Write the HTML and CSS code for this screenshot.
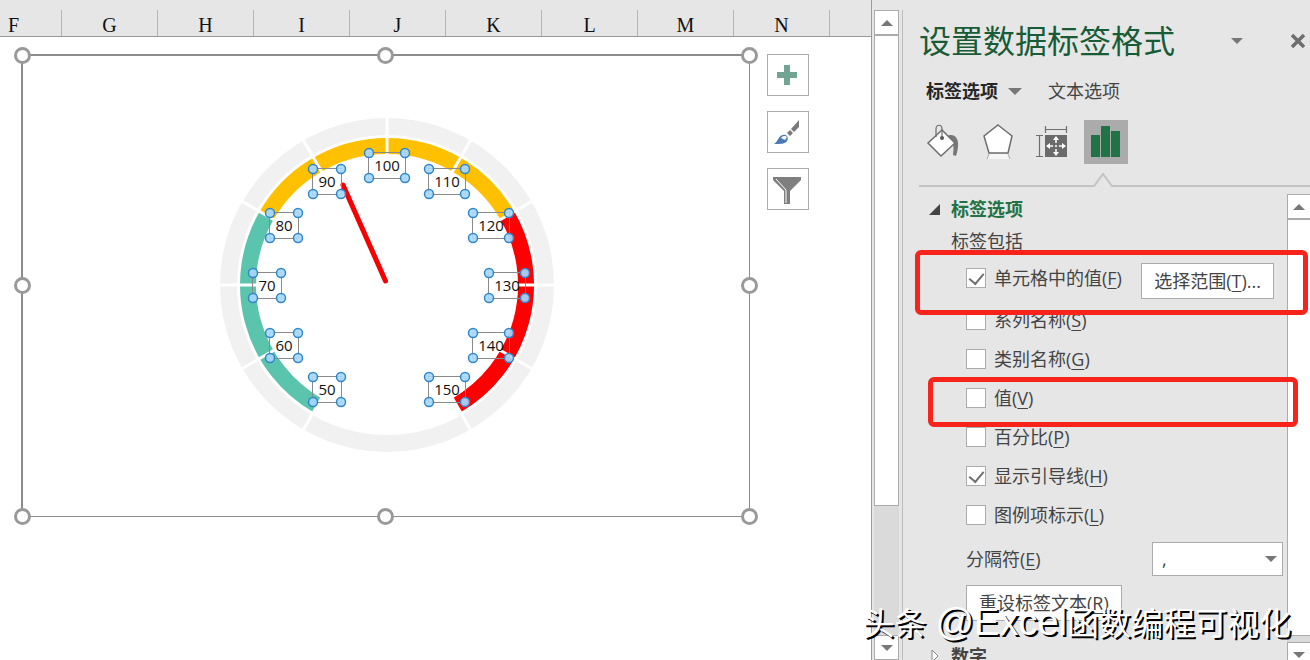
FILE: index.html
```
<!DOCTYPE html>
<html lang="zh-CN">
<head>
    <meta charset="UTF-8">
    <title>设置数据标签格式</title>
    <link rel="stylesheet" href="styles.css">
</head>
<body>
    <div class="app">
        <div class="sheet">
            <div class="columns">
                <span>F</span><span>G</span><span>H</span><span>I</span><span>J</span><span>K</span><span>L</span><span>M</span><span>N</span>
            </div>
            <div class="cells">
                <svg class="chart" viewBox="14 46 744 480" id="chart">
                    <path d="M21 55H749M22 55V517" stroke="#8c8c8c" stroke-width="2" fill="none"/>
                    <path d="M749.5 55V516.5H22" stroke="#8c8c8c" fill="none"/>
                    <g class="frame-handles">
                        <circle cx="22.5" cy="55.5" r="7"/>
                        <circle cx="385.5" cy="55.5" r="7"/>
                        <circle cx="749.5" cy="55.5" r="7"/>
                        <circle cx="22.5" cy="285.5" r="7"/>
                        <circle cx="749.5" cy="285.5" r="7"/>
                        <circle cx="22.5" cy="516.5" r="7"/>
                        <circle cx="385.5" cy="516.5" r="7"/>
                        <circle cx="749.5" cy="516.5" r="7"/>
                    </g>
                    <circle cx="387" cy="285" r="158.5" fill="none" stroke="#f1f1f1" stroke-width="17"/>
                    <g id="bands" fill="none" stroke-width="16"></g>
                    <g id="ticks" stroke="#fff" stroke-width="3"></g>
                    <path d="M343 185L385.5 281" stroke="#f80000" stroke-width="5" stroke-linecap="round"/>
                    <g id="labels"></g>
                </svg>
                <div class="chart-tools">
                    <button aria-label="图表元素">
                        <svg width="40" height="40" viewBox="0 0 40 40"><path d="M16 10h6v7h7v6h-7v7h-6v-7H9v-6h7z" fill="#72a493"/></svg>
                    </button>
                    <button aria-label="图表样式">
                        <svg width="40" height="40" viewBox="0 0 40 40">
                            <path d="M31 8v7l-5 5-3-3zM22 18l3 3-3 3-3-3z" fill="#7a7a7a"/>
                            <path d="M6 32c4-2 4-8 9-9 4-1 6 3 4 6-2 3-6 3-13 3z" fill="#4a7ab5"/>
                            <path d="M13 26c1-2 4-3 6-1l-2 3-2-1z" fill="#fff"/>
                        </svg>
                    </button>
                    <button aria-label="图表筛选器">
                        <svg width="40" height="40" viewBox="0 0 40 40">
                            <path d="M5 8h28v3L22 22v13h-6V22L5 11z" fill="#7f7f7f"/>
                            <path d="M8 10l10 11v13" fill="none" stroke="#fff"/>
                        </svg>
                    </button>
                </div>
            </div>
        </div>

        <div class="scrollbar sheet-scroll">
            <button class="scroll-btn" aria-label="向上"><span class="up"></span></button>
            <div class="thumb"></div>
            <div class="track"></div>
            <button class="scroll-btn" aria-label="向下"><span class="down"></span></button>
        </div>

        <div class="panel">
            <div class="panel-head">
                <h1>设置数据标签格式</h1>
                <button class="plain menu" aria-label="任务窗格选项"><span class="down"></span></button>
                <button class="plain" aria-label="关闭">
                    <svg width="16" height="16" viewBox="0 0 16 16"><path d="M2 2l12 12M14 2L2 14" stroke="#6e6e6e" stroke-width="3.5"/></svg>
                </button>
            </div>
            <div class="tabs">
                <button class="plain active">标签选项 <span class="down"></span></button>
                <button class="plain">文本选项</button>
            </div>
            <div class="icons">
                <button class="plain" aria-label="填充与线条">
                    <svg width="44" height="44" viewBox="0 0 44 44">
                        <path d="M27 15c8-1 12 6 7 21l-3-1c1-8 1-12-4-16z" fill="#777"/>
                        <path d="M20 10l13 13-14 13L6 23z" fill="#fff" stroke="#6e6e6e" stroke-width="1.5"/>
                        <path d="M14 17V9c0-5 6-5 6 0v8" fill="none" stroke="#6e6e6e" stroke-width="1.2"/>
                        <circle cx="20" cy="18" r="2" fill="#555"/>
                    </svg>
                </button>
                <button class="plain" aria-label="效果">
                    <svg width="44" height="44" viewBox="0 0 44 44">
                        <path d="M13 34h19l2 5H11z" fill="#f6f6f6"/>
                        <path d="M22 5l14 11-4 17H13L8 16z" fill="#fff" stroke="#6e6e6e" stroke-width="1.5"/>
                        <path d="M13 34l-2 5M32 34l2 5" stroke="#aaa"/>
                    </svg>
                </button>
                <button class="plain" aria-label="大小与属性">
                    <svg width="44" height="44" viewBox="0 0 44 44">
                        <path d="M15 15h22v22H15z" fill="#6b6b6b"/>
                        <path d="M15 9.5h22M15.500 6v7M36.500 6v7M9.500 15v22M6 15.500h7M6 36.500h7" stroke="#6e6e6e" stroke-width="1.2"/>
                        <path d="M26 18v5M26 29v5M18 26h5M29 26h5M25 26h2" stroke="#fff" stroke-width="1.5"/>
                        <path d="M26 16l3 4h-6zM26 36l3-4h-6zM16 26l4-3v6zM36 26l-4-3v6z" fill="#fff"/>
                    </svg>
                </button>
                <button class="plain selected" aria-label="标签选项">
                    <svg width="44" height="44" viewBox="0 0 44 44"><path d="M7 15h9v22H7zM17 6h9v31h-9zM27 11h9v26h-9z" fill="#217346"/></svg>
                </button>
            </div>
            <div class="divider">
                <span></span>
                <svg width="20" height="14" viewBox="0 0 20 14"><path d="M0 13h1L10 1l9 12h1" fill="none" stroke="#c3c3c3" stroke-width="2"/></svg>
                <span class="rest"></span>
            </div>
            <div class="panel-body">
                <div class="options">
                    <h2><span class="open"></span>标签选项</h2>
                    <p>标签包括</p>
                    <div class="row first">
                        <label><input type="checkbox" checked>单元格中的值(<u>F</u>)</label>
                        <button class="box-btn">选择范围(<u>T</u>)...</button>
                        <div class="mark mark-range"></div>
                    </div>
                    <div class="row"><label><input type="checkbox">系列名称(<u>S</u>)</label></div>
                    <div class="row"><label><input type="checkbox">类别名称(<u>G</u>)</label></div>
                    <div class="row">
                        <label><input type="checkbox">值(<u>V</u>)</label>
                        <div class="mark mark-value"></div>
                    </div>
                    <div class="row"><label><input type="checkbox">百分比(<u>P</u>)</label></div>
                    <div class="row"><label><input type="checkbox" checked>显示引导线(<u>H</u>)</label></div>
                    <div class="row"><label><input type="checkbox">图例项标示(<u>L</u>)</label></div>
                    <div class="row separator">
                        <label for="sep">分隔符(<u>E</u>)</label>
                        <div class="select">
                            <select id="sep"><option>,</option></select>
                            <span class="down"></span>
                        </div>
                    </div>
                    <button class="box-btn reset">重设标签文本(<u>R</u>)</button>
                    <h2 class="closed-title">
                        <svg width="8" height="14" viewBox="0 0 8 14"><path d="M1 1l6 6-6 6z" fill="#fff" stroke="#888"/></svg>数字
                    </h2>
                </div>
                <div class="scrollbar panel-scroll">
                    <button class="scroll-btn" aria-label="向上"><span class="up"></span></button>
                    <div class="thumb"></div>
                    <div class="track"></div>
                    <button class="scroll-btn" aria-label="向下"><span class="down"></span></button>
                </div>
            </div>
        </div>
        <div class="watermark">头条 <span>@Excel</span>函数编程可视化</div>
    </div>
    <script src="chart.js"></script>
</body>
</html>
```
FILE: styles.css
```
* {
    box-sizing: border-box;
}
body {
    margin: 0;
    background: #e6e6e6;
    color: #444;
    font: 18px/26px "Open Sans", "Noto Sans CJK SC", sans-serif;
}
button, select {
    font: inherit;
    color: inherit;
    padding: 0;
}
.app {
    position: relative;
    display: flex;
    height: 100vh;
    overflow: hidden;
}

/* worksheet */
.sheet {
    flex: 1;
    min-width: 0;
    display: flex;
    flex-direction: column;
    border-right: 1px solid #9b9b9b;
    background: #fff;
}
.columns {
    display: flex;
    height: 37px;
    padding-top: 10px;
    background: #e6e6e6;
    border-bottom: 1px solid #999;
    overflow: hidden;
}
.columns span {
    flex: 0 0 96px;
    text-align: center;
    color: #111;
    font: 20px/30px "Liberation Serif", serif;
    border-right: 1px solid #b5b5b5;
}
.columns span:first-child {
    margin-left: -34px;
}
.cells {
    display: flex;
    align-items: flex-start;
    gap: 9px;
    padding: 9px 0 0 14px;
}
.chart {
    flex: 0 1 744px;
    min-width: 0;
}
.frame-handles circle {
    fill: #fff;
    stroke: #999;
    stroke-width: 3;
}
.data-label rect {
    fill: none;
    stroke: #8a8a8a;
}
.data-label circle {
    fill: #a6d8ff;
    fill-opacity: 0.9;
    stroke: #2f86cc;
    stroke-width: 1.5;
}
.data-label text {
    font: 15px "Open Sans", sans-serif;
    fill: #111;
    text-anchor: middle;
}
.chart-tools {
    display: flex;
    flex-direction: column;
    gap: 15px;
    padding-top: 8px;
}
.chart-tools button {
    width: 42px;
    height: 42px;
    background: #fff;
    border: 1px solid #ababab;
}
.chart-tools svg {
    display: block;
}

/* arrows */
.up, .down {
    display: inline-block;
    border: 6px solid transparent;
}
.up {
    border-top: 0;
    border-bottom: 6px solid #777;
}
.down {
    border-bottom: 0;
    border-top: 6px solid #777;
}

/* scrollbars */
.scrollbar {
    display: flex;
    flex-direction: column;
    background: #dadada;
}
.scroll-btn {
    display: flex;
    flex-shrink: 0;
    align-items: center;
    justify-content: center;
    height: 25px;
    background: #fff;
    border: 1px solid #ababab;
}
.thumb {
    background: #fff;
    border: 1px solid #ababab;
}
.sheet-scroll {
    width: 25px;
    margin: 10px 3px 0 2px;
}
.sheet-scroll .thumb {
    flex: 471;
}
.sheet-scroll .track {
    flex: 130;
}
.panel-scroll {
    width: 23px;
    margin-bottom: -7px;
}
.panel-scroll .thumb {
    flex: 1;
}
.panel-scroll .track {
    height: 6px;
}
.panel-scroll .scroll-btn, .panel-scroll .thumb {
    border-right: 0;
}

/* format pane */
.panel {
    width: 408px;
    margin-top: 10px;
    border-left: 1px solid #bcbcbc;
    display: flex;
    flex-direction: column;
}
.plain {
    display: flex;
    align-items: center;
    background: none;
    border: 0;
}
.panel-head {
    display: flex;
    align-items: center;
    height: 62px;
    padding: 0 4px 0 16px;
}
.panel-head h1 {
    flex: 1;
    margin: 0;
    color: #185c37;
    font-size: 32px;
    font-weight: normal;
    line-height: 48px;
}
.panel-head .menu {
    margin-right: 47px;
}
.tabs {
    display: flex;
    gap: 26px;
    height: 38px;
    padding-left: 23px;
}
.tabs .active {
    gap: 10px;
    font-weight: bold;
    color: #262626;
}
.tabs .down {
    border-width: 7px 7px 0 7px;
}
.icons {
    display: flex;
    gap: 10px;
    padding: 10px 0 0 19px;
}
.icons .selected {
    background: #ababab;
}
.divider {
    display: flex;
    align-items: flex-end;
    height: 23px;
    padding: 0 0 0 16px;
}
.divider svg {
    display: block;
}
.divider span {
    width: 174px;
    border-bottom: 2px solid #c3c3c3;
}
.divider .rest {
    flex: 1;
}
.panel-body {
    flex: 1;
    min-height: 0;
    display: flex;
    padding-top: 7px;
}
.options {
    flex: 1;
    min-height: 0;
    padding-left: 25px;
}
.options h2 {
    display: flex;
    align-items: center;
    gap: 11px;
    margin: 0 0 0 1px;
    font-size: 18px;
    line-height: 30px;
    color: #217346;
}
.options p {
    margin: 4px 0 4px 23px;
}
.open {
    border-left: 11px solid transparent;
    border-bottom: 11px solid #444;
}
.row {
    position: relative;
    display: flex;
    align-items: center;
    height: 39px;
    padding-left: 38px;
}
.row label {
    display: flex;
    align-items: center;
    white-space: pre;
}
.row input {
    appearance: none;
    width: 20px;
    height: 20px;
    margin: 0 8px 0 0;
    background: #fff;
    border: 1px solid #ababab;
}
.row input:checked::before {
    content: "";
    display: block;
    width: 7px;
    height: 12px;
    margin: 1px 5px;
    border: solid #6e6e6e;
    border-width: 0 2px 2px 0;
    transform: rotate(40deg);
}
u {
    text-underline-offset: 3px;
    text-decoration-thickness: 1px;
}
.box-btn {
    height: 36px;
    padding: 0 12px;
    background: #fff;
    border: 1px solid #ababab;
    white-space: nowrap;
}
.first {
    height: 42px;
    align-items: flex-start;
}
.first label {
    height: 39px;
}
.first .box-btn {
    margin: 5px 13px 0 auto;
}
.mark {
    position: absolute;
    z-index: 1;
    border: 5px solid #f8231b;
    border-radius: 6px;
}
.mark-range {
    top: -8px;
    left: -13px;
    right: -21px;
    height: 65px;
}
.mark-value {
    top: -1px;
    left: 0;
    right: -11px;
    height: 50px;
}
.separator {
    justify-content: space-between;
    height: 50px;
    padding-right: 4px;
}
.select {
    position: relative;
}
.select select {
    appearance: none;
    width: 131px;
    height: 34px;
    padding-left: 9px;
    background: #fff;
    border: 1px solid #ababab;
    border-radius: 0;
}
.select .down {
    position: absolute;
    right: 6px;
    top: 14px;
}
.reset {
    display: block;
    margin: 1px 0 0 38px;
}
.options .closed-title {
    gap: 12px;
    margin: 20px 0 0 3px;
    color: #444;
}

.watermark {
    position: absolute;
    right: 19px;
    bottom: 12px;
    z-index: 2;
    color: #fff;
    font: 32px/48px "Liberation Sans", "Noto Sans CJK SC", sans-serif;
    white-space: nowrap;
    text-shadow: 2px 2px 0 #000;
}
.watermark span {
    font-size: 38px;
}
```
FILE: chart.js
```
const cx = 387;
const cy = 285;

// angle in degrees, clockwise from the top
function point(angle, r) {
    const a = angle * Math.PI / 180;
    return [cx + r * Math.sin(a), cy - r * Math.cos(a)];
}

const bands = [
    { from: -150, to: -60, color: '#5bc4ac' },
    { from: -60, to: 60, color: '#ffc000' },
    { from: 60, to: 150, color: '#ff0000' }
];
document.getElementById('bands').innerHTML = bands.map(b =>
    `<path d="M${point(b.from, 139)} A139 139 0 0 1 ${point(b.to, 139)}" stroke="${b.color}"/>`
).join('');

let ticks = '';
let labels = '';
for (let i = 0; i <= 10; i++) {
    const angle = -150 + i * 30;
    const [x1, y1] = point(angle, 130);
    const [x2, y2] = point(angle, 168);
    ticks += `<line x1="${x1}" y1="${y1}" x2="${x2}" y2="${y2}"/>`;

    const value = 50 + i * 10;
    const [px, py] = point(angle, 120);
    const x = Math.ceil(px);
    const y = Math.round(py);
    const w = value < 100 ? 14 : 18;
    labels += `<g class="data-label">
        <rect x="${x - w - 0.5}" y="${y - 12.5}" width="${w * 2 + 1}" height="26"/>
        <circle cx="${x - w}" cy="${y - 12}" r="4.5"/>
        <circle cx="${x + w}" cy="${y - 12}" r="4.5"/>
        <circle cx="${x - w}" cy="${y + 13}" r="4.5"/>
        <circle cx="${x + w}" cy="${y + 13}" r="4.5"/>
        <text x="${x}" y="${y + 6}">${value}</text>
    </g>`;
}
document.getElementById('ticks').innerHTML = ticks;
document.getElementById('labels').innerHTML = labels;
```
